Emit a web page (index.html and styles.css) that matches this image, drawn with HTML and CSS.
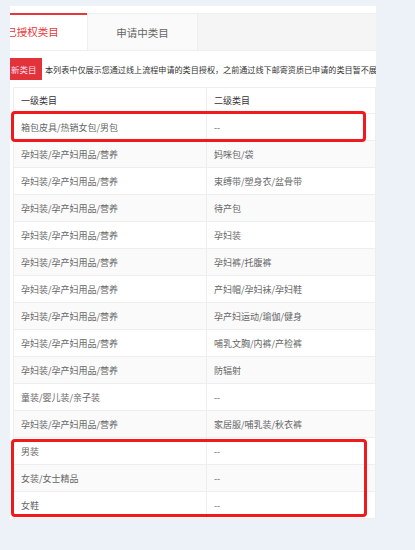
FILE: index.html
```html
<!DOCTYPE html>
<html lang="zh-CN">
<head>
    <meta charset="UTF-8">
    <meta name="viewport" content="width=device-width, initial-scale=1.0">
    <title>类目管理</title>
    <link rel="stylesheet" href="styles.css">
</head>
<body>
    <div class="page">
        <div class="card">
            <!-- Tabs -->
            <div class="tabs">
                <div class="tab active">已授权类目</div>
                <div class="tab">申请中类目</div>
            </div>

            <!-- Notice -->
            <div class="notice">
                <button class="apply-btn">新类目</button>
                <span class="notice-text">本列表中仅展示您通过线上流程申请的类目授权，之前通过线下邮寄资质已申请的类目暂不展示</span>
            </div>

            <!-- Category table -->
            <table class="cat-table">
                <colgroup>
                    <col class="col-first">
                    <col>
                </colgroup>
                <thead>
                    <tr><th>一级类目</th><th>二级类目</th></tr>
                </thead>
                <tbody>
                    <tr><td>箱包皮具/热销女包/男包</td><td>--</td></tr>
                    <tr><td>孕妇装/孕产妇用品/营养</td><td>妈咪包/袋</td></tr>
                    <tr><td>孕妇装/孕产妇用品/营养</td><td>束缚带/塑身衣/盆骨带</td></tr>
                    <tr><td>孕妇装/孕产妇用品/营养</td><td>待产包</td></tr>
                    <tr><td>孕妇装/孕产妇用品/营养</td><td>孕妇装</td></tr>
                    <tr><td>孕妇装/孕产妇用品/营养</td><td>孕妇裤/托腹裤</td></tr>
                    <tr><td>孕妇装/孕产妇用品/营养</td><td>产妇帽/孕妇袜/孕妇鞋</td></tr>
                    <tr><td>孕妇装/孕产妇用品/营养</td><td>孕产妇运动/瑜伽/健身</td></tr>
                    <tr><td>孕妇装/孕产妇用品/营养</td><td>哺乳文胸/内裤/产检裤</td></tr>
                    <tr><td>孕妇装/孕产妇用品/营养</td><td>防辐射</td></tr>
                    <tr><td>童装/婴儿装/亲子装</td><td>--</td></tr>
                    <tr><td>孕妇装/孕产妇用品/营养</td><td>家居服/哺乳装/秋衣裤</td></tr>
                    <tr><td>男装</td><td>--</td></tr>
                    <tr><td>女装/女士精品</td><td>--</td></tr>
                    <tr><td>女鞋</td><td>--</td></tr>
                </tbody>
            </table>
        </div>

        <!-- Red annotation boxes -->
        <div class="mark mark-top"></div>
        <div class="mark mark-bottom"></div>
    </div>
</body>
</html>
```

FILE: styles.css
```css
body {
    margin: 0;
    background-color: #edf1f8;
    font-family: "Noto Sans CJK SC", "Noto Sans", sans-serif;
    color: #333;
    overflow: hidden;
}
.page {
    position: relative;
    width: 366px;
    padding: 6px 39px 0 10px;
}
.card {
    background-color: #fff;
    padding-top: 7px;
    overflow: hidden;
}
.tabs {
    display: flex;
    height: 38px;
    margin-left: -32px;
    box-sizing: border-box;
    border-top: 1px solid #eeeeee;
    border-bottom: 1px solid #eeeeee;
    background-color: #f5f5f5;
}
.tab {
    flex: 0 0 110px;
    line-height: 38px;
    text-align: center;
    font-size: 10.5px;
    color: #666;
    background-color: #fafafa;
    border-right: 1px solid #eeeeee;
    box-sizing: border-box;
}
.tab.active {
    margin-top: -1px;
    height: 37px;
    color: #e5383b;
    background-color: #fff;
    box-shadow: inset 0 2px 0 #e5383b;
}
.notice {
    display: flex;
    align-items: center;
    height: 22px;
    margin-top: 7px;
    white-space: nowrap;
}
.apply-btn {
    flex: 0 0 32px;
    height: 22px;
    padding: 0 0 0 1px;
    text-align: left;
    border: none;
    background-color: #e13339;
    color: #fde;
    font-family: inherit;
    font-size: 8.5px;
}
.notice-text {
    margin-left: 3px;
    font-size: 8.1px;
    color: #333;
}
.cat-table {
    width: 363px;
    margin: 7px 0 0 3px;
    border-collapse: collapse;
    table-layout: fixed;
    font-size: 9px;
}
.col-first {
    width: 193px;
}
.cat-table th,
.cat-table td {
    padding: 0 7px;
    text-align: left;
    border: 1px solid #eeeeee;
    white-space: nowrap;
}
.cat-table th {
    height: 25px;
    font-weight: normal;
    color: #333;
}
.cat-table td {
    height: 26px;
    color: #666;
}
.cat-table tbody tr:nth-child(even) td {
    background-color: #fafafa;
}
.mark {
    position: absolute;
    left: 11px;
    border: 3px solid #f2191c;
    border-radius: 4px;
    box-sizing: border-box;
}
.mark-top {
    top: 111px;
    width: 355px;
    height: 31px;
}
.mark-bottom {
    top: 439px;
    width: 356px;
    height: 78px;
}
```
